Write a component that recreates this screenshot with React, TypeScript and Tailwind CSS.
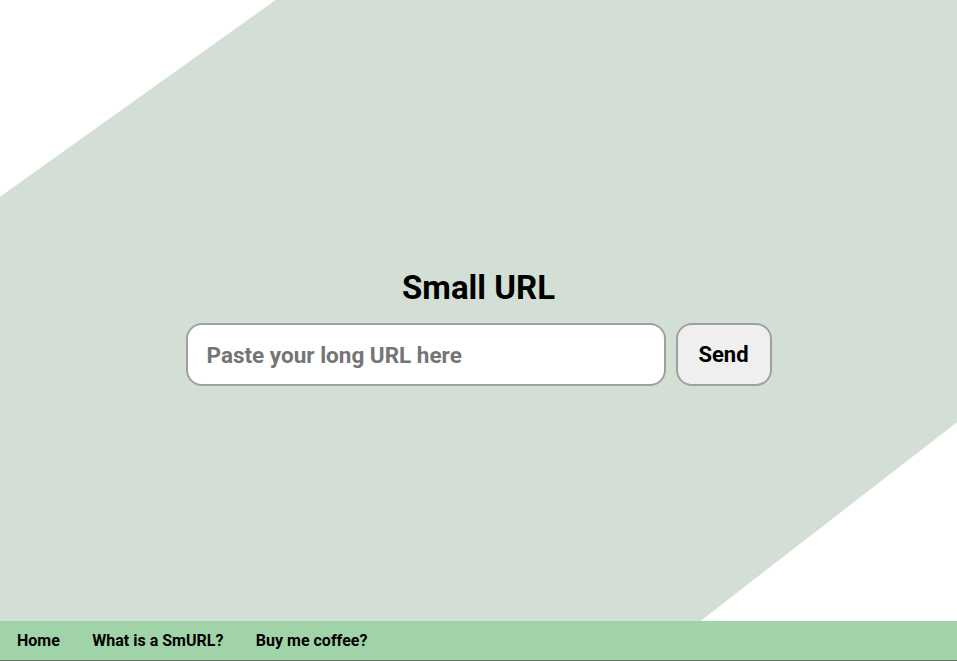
export default function App() {
  return (
    <div className="flex h-[661px] w-full flex-col bg-white font-['Roboto',sans-serif]">
      {/* Hero */}
      <main className="relative h-[621px] w-full overflow-hidden">
        <div className="absolute inset-0 bg-[#d3dfd4] [clip-path:polygon(28.8%_0,100%_0,100%_68%,73.2%_100%,0_100%,0_31.7%)]" />
        <div className="relative flex flex-col items-center pt-[268px]">
          <h1 className="text-[33px] font-bold leading-[40px] text-black">Small URL</h1>
          <form className="mt-[15px] flex gap-[10px]" onSubmit={(e) => e.preventDefault()}>
            <input
              type="text"
              placeholder="Paste your long URL here"
              className="h-[63px] w-[480px] rounded-[16px] border-2 border-[#a0a0a0] bg-white px-[19px] text-[22.5px] font-bold text-black outline-none placeholder:text-[#757575]"
            />
            <button
              type="submit"
              className="h-[63px] w-[96px] rounded-[16px] border-2 border-[#a0a0a0] bg-[#efefef] text-[22px] font-bold text-black"
            >
              Send
            </button>
          </form>
        </div>
      </main>

      {/* Footer nav */}
      <nav className="flex h-[40px] items-center gap-[32.5px] border-b border-[#6b6b6b] bg-[#a0d4a8] pl-[17px] text-[16px] font-bold text-black">
        <a href="#">Home</a>
        <a href="#">What is a SmURL?</a>
        <a href="#">Buy me coffee?</a>
      </nav>
    </div>
  );
}
